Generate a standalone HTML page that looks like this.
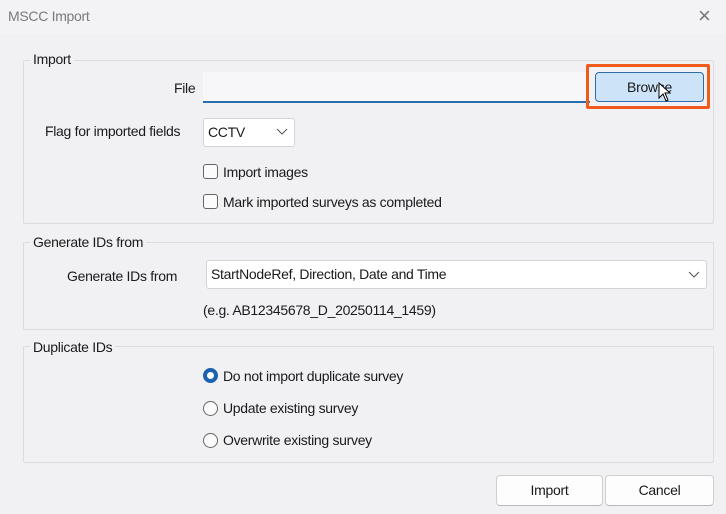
<!DOCTYPE html><html><head><style>
body{margin:0;width:726px;height:514px;background:#f1f0f3;font-family:"Liberation Sans",sans-serif;font-size:14px;color:#1a1a1a;position:relative;overflow:hidden;letter-spacing:-0.3px}
.a{position:absolute;white-space:nowrap}
.g{position:absolute;border:1px solid #dcdbe0;border-radius:2px}
.lg{position:absolute;background:#f1f0f3;padding:0 3px}
.box{position:absolute;background:#fff;border:1px solid #d4d4d8;border-radius:3px}
.cb{position:absolute;width:13px;height:13px;border:1px solid #666;border-radius:3px;background:#fbfbfb}
.rd{position:absolute;width:13px;height:13px;border:1px solid #666;border-radius:50%;background:#fbfbfb}
.btn{position:absolute;background:#fdfdfd;border:1px solid #d0d0d0;border-bottom-color:#b8b8b8;border-radius:4px;text-align:center;line-height:28px}
</style></head><body>
<div class="a" style="left:0;top:0;width:726px;height:34px;background:#f3f2f5"></div>
<div class="a" style="left:8px;top:8px;color:#7a7a7a">MSCC Import</div>
<div class="a" style="left:698px;top:3px;color:#777;font-size:22px;font-weight:100">×</div>

<div class="g" style="left:23px;top:60px;width:689px;height:162px"></div>
<div class="lg" style="left:30px;top:51px">Import</div>
<div class="a" style="left:174px;top:80px">File</div>
<div class="a" style="left:203px;top:72px;width:387px;height:29px;background:#f7f7f9;border-bottom:2px solid #2a6dad"></div>
<div class="a" style="left:586px;top:64px;width:118px;height:39px;border:3px solid #f05a1a;border-radius:2px"></div>
<div class="btn" style="left:595px;top:72px;width:107px;height:28px;background:#cde3f8;border:1px solid #2e6bab;border-radius:4px">Browse</div>
<svg class="a" style="left:658px;top:82px" width="14" height="22"><path d="M1 1 L1 16 L5 12 L8 19 L10 18 L7 11 L12 11 Z" fill="#fff" stroke="#000" stroke-width="1"/></svg>
<div class="a" style="left:45px;top:123px">Flag for imported fields</div>
<div class="box" style="left:203px;top:118px;width:90px;height:27px"></div>
<div class="a" style="left:208px;top:124px">CCTV</div>
<svg class="a" style="left:276px;top:128px" width="12" height="8"><path d="M1 1 L6 6 L11 1" fill="none" stroke="#555"/></svg>
<div class="cb" style="left:203px;top:164px"></div>
<div class="a" style="left:223px;top:164px">Import images</div>
<div class="cb" style="left:203px;top:194px"></div>
<div class="a" style="left:223px;top:194px">Mark imported surveys as completed</div>

<div class="g" style="left:23px;top:242px;width:689px;height:86px"></div>
<div class="lg" style="left:30px;top:234px">Generate IDs from</div>
<div class="a" style="left:67px;top:268px">Generate IDs from</div>
<div class="box" style="left:206px;top:260px;width:499px;height:27px"></div>
<div class="a" style="left:211px;top:266px">StartNodeRef, Direction, Date and Time</div>
<svg class="a" style="left:688px;top:271px" width="12" height="8"><path d="M1 1 L6 6 L11 1" fill="none" stroke="#555"/></svg>
<div class="a" style="left:203px;top:302px">(e.g. AB12345678_D_20250114_1459)</div>

<div class="g" style="left:23px;top:346px;width:689px;height:115px"></div>
<div class="lg" style="left:30px;top:339px">Duplicate IDs</div>
<div class="rd" style="left:203px;top:368px;background:#fff;border:4px solid #1b62b0;width:7px;height:7px"></div>
<div class="a" style="left:223px;top:368px">Do not import duplicate survey</div>
<div class="rd" style="left:203px;top:401px"></div>
<div class="a" style="left:223px;top:400px">Update existing survey</div>
<div class="rd" style="left:203px;top:433px"></div>
<div class="a" style="left:223px;top:432px">Overwrite existing survey</div>

<div class="btn" style="left:496px;top:475px;width:105px;height:29px">Import</div>
<div class="btn" style="left:605px;top:475px;width:107px;height:29px">Cancel</div>
</body></html>
